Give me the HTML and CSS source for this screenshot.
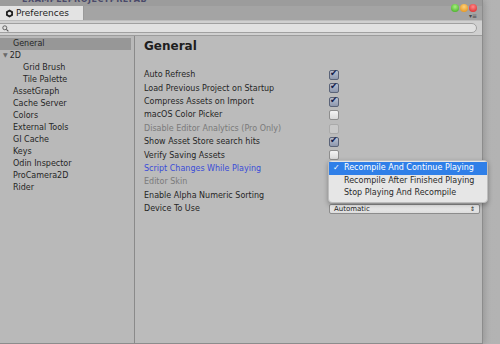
FILE: index.html
```html
<!DOCTYPE html>
<html lang="en">
<head>
  <meta charset="UTF-8">
  <title>Preferences</title>
  <link rel="stylesheet" href="styles.css">
</head>
<body>
  <div class="desk">
    <div class="window">
      <div class="topstrip"><span class="ghost">EXAMPLEPROJECTPREFAB</span></div>
      <div class="lights">
        <span class="light green"></span>
        <span class="light orange"></span>
        <span class="light red"></span>
      </div>
      <div class="tabbar">
        <div class="tab">
          <svg class="cog" width="9" height="9" viewBox="0 0 10 10">
            <path d="M5 0.5 L8.9 2.75 L8.9 7.25 L5 9.5 L1.1 7.25 L1.1 2.75 Z" fill="#222"/>
            <circle cx="5" cy="5" r="2" fill="#e4e4e4"/>
          </svg>
          Preferences
        </div>
        <div class="menuicon">&#9662;&#8801;</div>
      </div>
      <div class="searchrow">
        <div class="search">
          <svg width="7" height="7" viewBox="0 0 8 8"><circle cx="3.2" cy="3.2" r="2.3" fill="none" stroke="#555" stroke-width="1"/><path d="M5 5 L7.3 7.3" stroke="#555" stroke-width="1.2"/></svg>
        </div>
      </div>
      <div class="body">
        <ul class="sidebar">
          <li class="selected">General</li>
          <li class="group"><span class="tri">&#9660;</span>2D</li>
          <li class="sub">Grid Brush</li>
          <li class="sub">Tile Palette</li>
          <li>AssetGraph</li>
          <li>Cache Server</li>
          <li>Colors</li>
          <li>External Tools</li>
          <li>GI Cache</li>
          <li>Keys</li>
          <li>Odin Inspector</li>
          <li>ProCamera2D</li>
          <li>Rider</li>
        </ul>
        <div class="content">
          <h2>General</h2>
          <div class="rows">
            <div class="row"><span>Auto Refresh</span><span class="check on"></span></div>
            <div class="row"><span>Load Previous Project on Startup</span><span class="check on"></span></div>
            <div class="row"><span>Compress Assets on Import</span><span class="check on"></span></div>
            <div class="row"><span>macOS Color Picker</span><span class="check"></span></div>
            <div class="row off"><span>Disable Editor Analytics (Pro Only)</span><span class="check dim"></span></div>
            <div class="row"><span>Show Asset Store search hits</span><span class="check on"></span></div>
            <div class="row"><span>Verify Saving Assets</span><span class="check"></span></div>
            <div class="row focus"><span>Script Changes While Playing</span></div>
            <div class="row off"><span>Editor Skin</span></div>
            <div class="row"><span>Enable Alpha Numeric Sorting</span></div>
            <div class="row"><span>Device To Use</span><span class="select">Automatic<span class="arrows">&#8661;</span></span></div>
          </div>
          <div class="popup">
            <div class="item active"><span class="tick">&#10003;</span>Recompile And Continue Playing</div>
            <div class="item">Recompile After Finished Playing</div>
            <div class="item">Stop Playing And Recompile</div>
          </div>
        </div>
      </div>
    </div>
  </div>
</body>
</html>
```
FILE: styles.css
```css
body {
  margin: 0;
  background-color: #ababab;
  font-family: "DejaVu Sans", Verdana, sans-serif;
  font-size: 8px;
  color: #262626;
}
.desk {
  width: 500px;
  height: 344px;
  overflow: hidden;
  background: linear-gradient(to right, #a6a6a6, #b3b3b3);
}
.window {
  width: 482px;
  height: 343px;
  background-color: #bababa;
  border-right: 1px solid #8c8c8c;
  border-bottom: 1px solid #8c8c8c;
  box-shadow: 2px 0 6px rgba(0, 0, 0, 0.15);
  display: flex;
  flex-direction: column;
  position: relative;
}
.topstrip {
  height: 6px;
  background-color: #9c9c9c;
  overflow: hidden;
  position: relative;
}
.ghost {
  position: absolute;
  left: 22px;
  top: -4px;
  font-size: 8px;
  line-height: 8px;
  font-weight: bold;
  color: #4a4a6a;
  letter-spacing: 0.5px;
}
.lights {
  position: absolute;
  right: 5px;
  top: 4px;
  display: flex;
  gap: 1px;
  z-index: 1;
}
.light {
  width: 8px;
  height: 8px;
  border-radius: 50%;
}
.green { background: radial-gradient(circle at 50% 35%, #a6f07e, #39a51c); }
.orange { background: radial-gradient(circle at 50% 35%, #ffd27a, #e08a10); }
.red { background: radial-gradient(circle at 50% 35%, #ff8a8a, #d61e1e); }
.tabbar {
  height: 14px;
  background-color: #a4a4a4;
  display: flex;
  align-items: stretch;
  position: relative;
}
.tab {
  width: 78px;
  background-color: #e3e3e3;
  border-right: 1px solid #9a9a9a;
  padding-left: 5px;
  display: flex;
  align-items: center;
  gap: 2px;
  font-size: 9px;
  color: #1e1e1e;
}
.menuicon {
  position: absolute;
  right: 5px;
  top: 7px;
  font-size: 6px;
  line-height: 6px;
  color: #444;
}
.searchrow {
  height: 12px;
  background-color: #d0d0d0;
  border-top: 1px solid #bdbdbd;
  border-bottom: 1px solid #9c9c9c;
  padding: 2px 5px 0 0;
}
.search {
  height: 8px;
  margin-left: -6px;
  background-color: #e1e1e1;
  border: 1px solid #a0a0a0;
  border-radius: 6px;
  display: flex;
  align-items: center;
  padding-left: 7px;
}
.body {
  flex: 1;
  display: flex;
}
.sidebar {
  list-style: none;
  margin: 0;
  padding: 2px 0 0 0;
  width: 134px;
  border-right: 1px solid #8a8a8a;
  background-color: #b9b9b9;
}
.sidebar li {
  height: 12px;
  line-height: 12px;
  padding-left: 13px;
  margin-right: 3px;
}
.sidebar li.selected {
  background-color: #979797;
}
.sidebar li.group {
  padding-left: 3px;
}
.tri {
  font-size: 6px;
  color: #6a6a6a;
  margin-right: 2px;
  position: relative;
  top: -1px;
}
.sidebar li.sub {
  padding-left: 23px;
}
.content {
  flex: 1;
  padding: 1px 0 0 9px;
  position: relative;
  background-color: #bbbbbb;
}
.content h2 {
  margin: 0;
  height: 23px;
  line-height: 18px;
  font-size: 12px;
  font-weight: bold;
  color: #1e1e1e;
}
.rows {
  padding-top: 8px;
}
.row {
  height: 13.4px;
  display: flex;
  align-items: center;
  position: relative;
}
.row.off { color: #7a7a7a; }
.row.focus { color: #3a4cd8; }
.check {
  position: absolute;
  left: 185px;
  top: 2px;
  width: 8px;
  height: 8px;
  border: 1px solid #8e8e8e;
  border-radius: 2px;
  background: linear-gradient(#f3f3f3, #d9d9d9);
}
.check.dim {
  border-color: #aaaaaa;
  background: #c9c9c9;
}
.check.on {
  border-color: #5a6378;
  background: linear-gradient(#b9c0d0, #8d97ad);
}
.check.on::after {
  content: "\2714";
  position: absolute;
  left: 0;
  top: -3px;
  font-size: 9px;
  color: #14204a;
}
.select {
  position: absolute;
  left: 185px;
  top: 2px;
  width: 141px;
  height: 8px;
  padding: 0 4px;
  border: 1px solid #8c8c8c;
  border-radius: 2px;
  background: linear-gradient(#f2f2f2, #dcdcdc);
  font-size: 7px;
  line-height: 8px;
  color: #222;
  display: flex;
  justify-content: space-between;
}
.arrows {
  font-size: 6px;
}
.popup {
  position: absolute;
  left: 193px;
  top: 124px;
  width: 158px;
  padding: 1px 0 2px 0;
  background-color: #e6e6e6;
  border: 1px solid #bdbdbd;
  border-radius: 4px;
  box-shadow: 0 2px 5px rgba(0, 0, 0, 0.3);
  z-index: 2;
}
.item {
  height: 12.5px;
  line-height: 12.5px;
  padding-left: 15px;
  font-size: 8px;
  color: #2a2a2a;
  position: relative;
}
.item.active {
  background-color: #2f7fe8;
  color: #fff;
}
.tick {
  position: absolute;
  left: 4px;
}
```
